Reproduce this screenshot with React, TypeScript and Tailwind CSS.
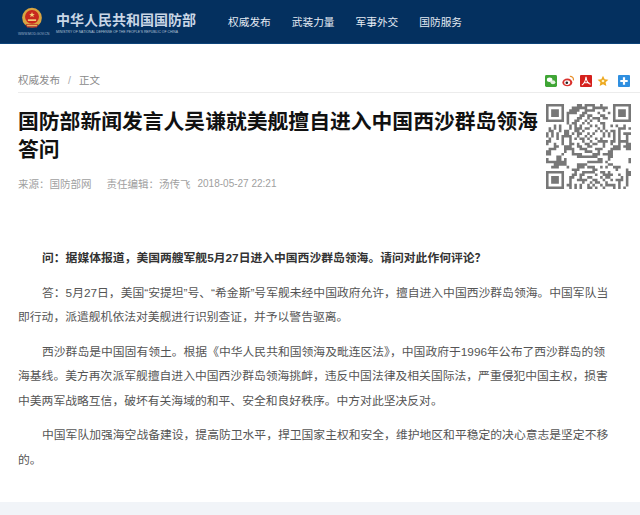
const NAV = ["权威发布", "武装力量", "军事外交", "国防服务"];

const PARAGRAPHS = [
  "答：5月27日，美国“安提坦”号、“希金斯”号军舰未经中国政府允许，擅自进入中国西沙群岛领海。中国军队当即行动，派遣舰机依法对美舰进行识别查证，并予以警告驱离。",
  "西沙群岛是中国固有领土。根据《中华人民共和国领海及毗连区法》，中国政府于1996年公布了西沙群岛的领海基线。美方再次派军舰擅自进入中国西沙群岛领海挑衅，违反中国法律及相关国际法，严重侵犯中国主权，损害中美两军战略互信，破坏有关海域的和平、安全和良好秩序。中方对此坚决反对。",
  "中国军队加强海空战备建设，提高防卫水平，捍卫国家主权和安全，维护地区和平稳定的决心意志是坚定不移的。",
];

function Emblem() {
  return (
    <svg width="22" height="23" viewBox="0 0 26 28" className="mx-auto">
      <circle cx="13" cy="13" r="12" fill="#d9a441" />
      <circle cx="13" cy="12" r="8.5" fill="#c8281e" />
      <path d="M8 15h10v2H8z" fill="#f3d27a" />
      <path d="M13 6l1 2.5h2.4l-2 1.5.8 2.4-2.2-1.5-2.2 1.5.8-2.4-2-1.5H12z" fill="#f3d27a" />
      <path d="M5 21h16l-2 4H7z" fill="#b9302a" />
      <path d="M7 22h12v1.4H7z" fill="#e8c267" />
    </svg>
  );
}

function ShareIcons() {
  return (
    <div className="flex items-center">
      <svg width="12" height="12" viewBox="0 0 13 13">
        <rect width="13" height="13" rx="1.5" fill="#3fa535" />
        <ellipse cx="5" cy="5.2" rx="3" ry="2.4" fill="#fff" />
        <ellipse cx="8.6" cy="7.8" rx="2.6" ry="2.1" fill="#e3f2df" />
      </svg>
      <svg width="12" height="12" viewBox="0 0 13 13" className="ml-[5px]">
        <ellipse cx="5.8" cy="8" rx="5.4" ry="4.2" fill="#d9322e" />
        <ellipse cx="5.6" cy="8.2" rx="3.2" ry="2.5" fill="#fff" />
        <circle cx="5.2" cy="8.4" r="1.4" fill="#222" />
        <path d="M8.5 1.5a3.5 3.5 0 0 1 3.8 4.3" fill="none" stroke="#e8912e" strokeWidth="1.3" />
      </svg>
      <svg width="12" height="12" viewBox="0 0 13 13" className="ml-[6px]">
        <rect width="13" height="13" rx="1" fill="#d5201c" />
        <path d="M6.5 2 C6 6 4.5 9.5 2 11 M6.5 2 C7 6 9 9.5 11.5 10 M4 8.5 H10" fill="none" stroke="#fff" strokeWidth="1.1" />
      </svg>
      <svg width="12" height="12" viewBox="0 0 14 13" className="ml-[5px]">
        <path d="M7 .5l1.9 4 4.4.5-3.3 3 .9 4.4L7 10.2l-3.9 2.2.9-4.4-3.3-3 4.4-.5z" fill="#eda920" />
        <circle cx="7" cy="6.5" r="1.6" fill="#fff3c4" />
      </svg>
      <svg width="12" height="12" viewBox="0 0 13 13" className="ml-[9px]">
        <rect width="13" height="13" rx="1" fill="#2f8fe0" />
        <path d="M5.3 2.5h2.4v2.8h2.8v2.4H7.7v2.8H5.3V7.7H2.5V5.3h2.8z" fill="#fff" />
      </svg>
    </div>
  );
}

// finder patterns are fixed, the data modules only need to read as noise
function QrCode() {
  const size = 33;
  const cells: string[] = [];
  const inFinder = (x: number, y: number) =>
    (x < 8 && y < 8) || (x >= size - 8 && y < 8) || (x < 8 && y >= size - 8);
  for (let y = 0; y < size; y++) {
    for (let x = 0; x < size; x++) {
      if (inFinder(x, y)) continue;
      const n = (x * 7 + y * 13 + ((x * y) % 11) * 5 + ((x ^ y) % 7) * 3) % 9;
      if (n < 4) cells.push(`M${x} ${y}h1v1h-1z`);
    }
  }
  const finder = (x: number, y: number) =>
    `M${x} ${y}h7v7h-7zM${x + 1} ${y + 1}v5h5v-5zM${x + 2} ${y + 2}h3v3h-3z`;
  return (
    <svg width="85" height="85" viewBox="0 0 33 33" className="shrink-0">
      <path d={cells.join("")} fill="#777" />
      <path d={finder(0, 0) + finder(26, 0) + finder(0, 26)} fill="#777" fillRule="evenodd" />
    </svg>
  );
}

export default function App() {
  return (
    <div className="h-[515px] w-[640px] overflow-hidden bg-white font-['Liberation_Sans','Noto_Sans_CJK_SC',sans-serif]">
      <header className="flex h-[44px] items-center border-b border-[#0d4479] bg-[#04305f] pl-[18px]">
        <div className="w-[28px]">
          <Emblem />
          <p className="mt-[2px] whitespace-nowrap text-[3.3px] leading-[4px] text-[#9fb4cc]">WWW.MOD.GOV.CN</p>
        </div>
        <div className="ml-[10px] mt-[3px] w-[140px]">
          <p className="whitespace-nowrap text-[14px] leading-[17px] font-bold text-[#c9d6e6]">中华人民共和国国防部</p>
          <p className="mt-[1px] whitespace-nowrap text-[3.4px] leading-[5px] text-[#b5c5d8]">MINISTRY OF NATIONAL DEFENSE OF THE PEOPLE'S REPUBLIC OF CHINA</p>
        </div>
        <nav className="ml-[32px] flex gap-[21px]">
          {NAV.map((item) => (
            <span key={item} className="text-[10.7px] leading-[14px] text-[#e4ebf3]">
              {item}
            </span>
          ))}
        </nav>
      </header>

      <div className="flex h-[48px] items-end justify-between pb-[5px] pl-[18px] pr-[10px]">
        <p className="text-[10.5px] leading-[14px] text-[#8a8a8a]">
          权威发布<span className="mx-[8px] text-[#aaa]">/</span>正文
        </p>
        <ShareIcons />
      </div>
      <div className="ml-[18px] h-px bg-[#ececec]" />

      <div className="flex pl-[18px] pr-[9px] pt-[11px]">
        <div className="min-w-0 flex-1">
          <h1 className="pt-[4px] text-[20.8px] leading-[28px] font-bold text-[#111]">
            国防部新闻发言人吴谦就美舰擅自进入中国西沙群岛领海答问
          </h1>
          <p className="mt-[13px] flex text-[10.5px] leading-[14px] text-[#a0a0a0]">
            <span>来源：国防部网</span>
            <span className="ml-[15px]">责任编辑：汤传飞</span>
            <span className="ml-[7px] text-[10px]">2018-05-27 22:21</span>
          </p>
        </div>
        <div className="ml-[4px]">
          <QrCode />
        </div>
      </div>

      <article className="pl-[18px] pr-[26px] pt-[55px] text-[11.8px] leading-[24.5px] text-[#555]">
        <p className="indent-[24px] font-bold text-[#333]">
          问：据媒体报道，美国两艘军舰5月27日进入中国西沙群岛领海。请问对此作何评论？
        </p>
        {PARAGRAPHS.map((text) => (
          <p key={text} className="mt-[10px] indent-[24px]">
            {text}
          </p>
        ))}
      </article>

      <footer className="mt-[30px] h-[20px] bg-[#f1f4f8]" />
    </div>
  );
}
